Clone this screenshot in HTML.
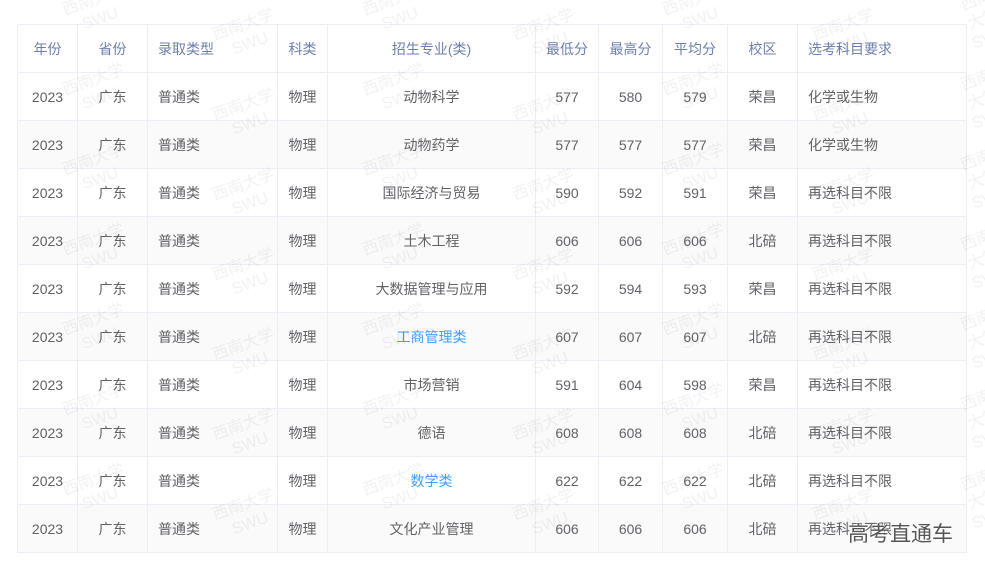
<!DOCTYPE html>
<html><head><meta charset="utf-8"><style>
html,body{margin:0;width:985px;height:571px;background:#fff;position:relative;overflow:hidden;font-family:"Liberation Sans","Noto Sans CJK SC",sans-serif;}
table{position:absolute;left:17px;top:24px;border-collapse:collapse;width:949px;table-layout:fixed;font-size:14px;color:#606266;}
td,th{border:1px solid #ebeef5;height:47px;padding:0 10px;text-align:center;font-weight:normal;}
th{color:#6c7fae;}
tr:nth-child(odd) td{background:#fafafa;}
.l{text-align:left;}
.b{color:#409eff;}
#w{position:absolute;left:0;top:0;width:985px;height:571px;overflow:hidden;z-index:2;pointer-events:none}
.wm{position:absolute;color:rgba(0,0,0,0.055);font-size:16px;transform:rotate(-20deg);text-align:center;line-height:20px;}
.gk{position:absolute;left:848px;top:518px;font-size:21px;color:#555;text-shadow:0 0 2px #fff,0 0 2px #fff;z-index:3}
</style></head><body>
<table>
<colgroup><col style="width:60px"><col style="width:70px"><col style="width:130px"><col style="width:50px"><col style="width:208px"><col style="width:63px"><col style="width:64px"><col style="width:65px"><col style="width:70px"><col style="width:169px"></colgroup>
<tr><th>年份</th><th>省份</th><th class="l">录取类型</th><th>科类</th><th>招生专业(类)</th><th>最低分</th><th>最高分</th><th>平均分</th><th>校区</th><th class="l">选考科目要求</th></tr>
<tr><td>2023</td><td>广东</td><td class="l">普通类</td><td>物理</td><td>动物科学</td><td>577</td><td>580</td><td>579</td><td>荣昌</td><td class="l">化学或生物</td></tr>
<tr><td>2023</td><td>广东</td><td class="l">普通类</td><td>物理</td><td>动物药学</td><td>577</td><td>577</td><td>577</td><td>荣昌</td><td class="l">化学或生物</td></tr>
<tr><td>2023</td><td>广东</td><td class="l">普通类</td><td>物理</td><td>国际经济与贸易</td><td>590</td><td>592</td><td>591</td><td>荣昌</td><td class="l">再选科目不限</td></tr>
<tr><td>2023</td><td>广东</td><td class="l">普通类</td><td>物理</td><td>土木工程</td><td>606</td><td>606</td><td>606</td><td>北碚</td><td class="l">再选科目不限</td></tr>
<tr><td>2023</td><td>广东</td><td class="l">普通类</td><td>物理</td><td>大数据管理与应用</td><td>592</td><td>594</td><td>593</td><td>荣昌</td><td class="l">再选科目不限</td></tr>
<tr><td>2023</td><td>广东</td><td class="l">普通类</td><td>物理</td><td class="b">工商管理类</td><td>607</td><td>607</td><td>607</td><td>北碚</td><td class="l">再选科目不限</td></tr>
<tr><td>2023</td><td>广东</td><td class="l">普通类</td><td>物理</td><td>市场营销</td><td>591</td><td>604</td><td>598</td><td>荣昌</td><td class="l">再选科目不限</td></tr>
<tr><td>2023</td><td>广东</td><td class="l">普通类</td><td>物理</td><td>德语</td><td>608</td><td>608</td><td>608</td><td>北碚</td><td class="l">再选科目不限</td></tr>
<tr><td>2023</td><td>广东</td><td class="l">普通类</td><td>物理</td><td class="b">数学类</td><td>622</td><td>622</td><td>622</td><td>北碚</td><td class="l">再选科目不限</td></tr>
<tr><td>2023</td><td>广东</td><td class="l">普通类</td><td>物理</td><td>文化产业管理</td><td>606</td><td>606</td><td>606</td><td>北碚</td><td class="l">再选科目不限</td></tr>
</table>
<div id="w"></div>
<script>
var h='';
for(var r=-1;r<7;r++){for(var c=0;c<7;c++){var x=65+c*150,y=-10+r*80+(c%2?25:0);h+='<div class="wm" style="left:'+x+'px;top:'+y+'px">西南大学<br>SWU</div>';}}
document.getElementById('w').innerHTML=h;
</script>
<div class="gk">高考直通车</div>
</body></html>
